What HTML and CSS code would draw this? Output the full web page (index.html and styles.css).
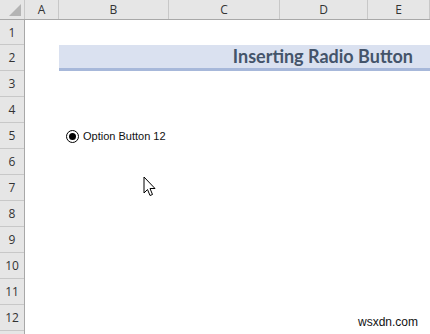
FILE: index.html
```
<!DOCTYPE html>
<html lang="en">

<head>
	<meta charset="UTF-8">
	<title>Inserting Radio Button</title>
	<link rel="stylesheet" href="styles.css">
</head>

<body>
	<div class="sheet">
		<div class="colhead">
			<div class="corner"><span class="tri"></span></div>
			<div class="col">A</div>
			<div class="col">B</div>
			<div class="col">C</div>
			<div class="col">D</div>
			<div class="col">E</div>
		</div>

		<div class="grid">
			<div class="rowhead">
				<div class="r first">1</div>
				<div class="r">2</div>
				<div class="r">3</div>
				<div class="r">4</div>
				<div class="r">5</div>
				<div class="r">6</div>
				<div class="r">7</div>
				<div class="r">8</div>
				<div class="r">9</div>
				<div class="r">10</div>
				<div class="r">11</div>
				<div class="r">12</div>
				<div class="r"></div>
			</div>

			<div class="cells">
				<div class="title">Inserting Radio Button</div>
				<label class="option">
					<span class="radio"><span class="dot"></span></span>
					Option Button 12
				</label>

				<!-- puntero del raton encima de la hoja -->
				<svg class="cursor" width="14" height="22" viewBox="0 0 14 22">
					<path d="M1 1 L1 17 L4.5 13.5 L7 19.5 L9.5 18.5 L7 12.5 L12 12.5 Z" fill="#fff" stroke="#000" stroke-width="1" stroke-linejoin="miter" />
				</svg>
			</div>
		</div>

		<div class="mark">wsxdn.com</div>
	</div>
</body>

</html>
```

FILE: styles.css
```
body,
html {
	margin: 0;
	padding: 0;
	background: white;
}

.sheet {
	position: relative;
	width: 430px;
	height: 334px;
	overflow: hidden;
	font-family: 'Open Sans', 'Liberation Sans', sans-serif;
}

.colhead {
	display: grid;
	grid-template-columns: 25px 34px 110px 111px 88px 1fr;
	height: 19px;
	background: #e6e6e6;
	border-bottom: 1px solid #a8a8a8;
}

.corner {
	position: relative;
	border-right: 1px solid #c8c8c8;
}

.tri {
	position: absolute;
	right: 3px;
	bottom: 3px;
	width: 0;
	height: 0;
	border-left: 12px solid transparent;
	border-bottom: 12px solid #b4b4b4;
}

.col {
	border-right: 1px solid #c8c8c8;
	text-align: center;
	font-size: 12px;
	line-height: 19px;
	color: #333;
}

.grid {
	display: flex;
}

.rowhead {
	width: 24px;
	background: #e6e6e6;
	border-right: 1px solid #a8a8a8;
}

.r {
	height: 25px;
	border-bottom: 1px solid #c8c8c8;
	text-align: center;
	font-size: 12px;
	line-height: 26px;
	color: #333;
}

.r.first {
	height: 24px;
	line-height: 25px;
}

.cells {
	position: relative;
	flex: 1;
	display: grid;
	grid-template-columns: 34px 110px 1fr;
	grid-template-rows: 25px 26px 26px 26px 26px;
}

.title {
	grid-column: 2 / -1;
	grid-row: 2;
	background: #dae1f0;
	border-bottom: 3px solid #a7b8da;
	text-align: right;
	padding-right: 17px;
	font-family: 'Lato', sans-serif;
	font-weight: 700;
	font-size: 18px;
	line-height: 23px;
	color: #44546a;
}

.option {
	grid-column: 2 / 4;
	grid-row: 5;
	display: flex;
	align-items: center;
	gap: 4px;
	padding-left: 7px;
	font-family: 'Liberation Sans', sans-serif;
	font-size: 11px;
	color: #111;
}

.radio {
	display: flex;
	align-items: center;
	justify-content: center;
	width: 11px;
	height: 11px;
	border: 1px solid #000;
	border-radius: 50%;
	background: white;
}

.dot {
	width: 7px;
	height: 7px;
	border-radius: 50%;
	background: #000;
}

.cursor {
	position: absolute;
	left: 118px;
	top: 156px;
}

.mark {
	position: absolute;
	right: 12px;
	bottom: 5px;
	font-family: 'Liberation Sans', sans-serif;
	font-size: 12px;
	color: #111;
}
```
